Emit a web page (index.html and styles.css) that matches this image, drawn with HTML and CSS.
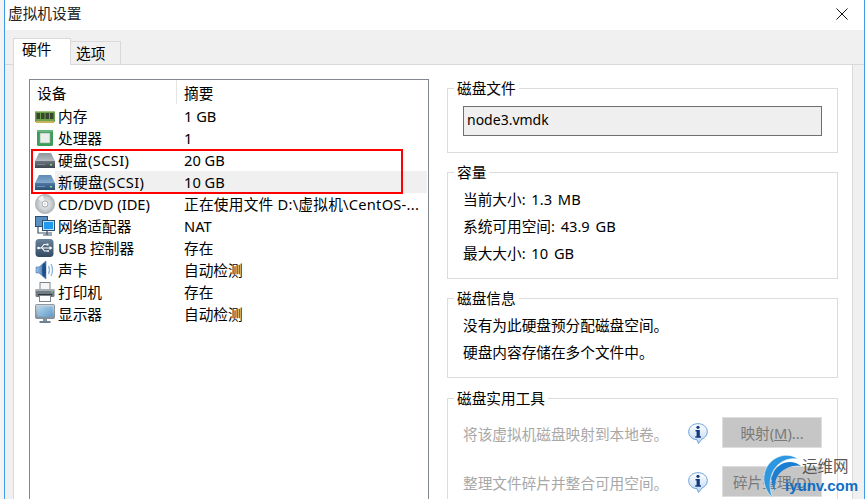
FILE: index.html
```html
<!DOCTYPE html>
<html lang="zh">
<head>
<meta charset="utf-8">
<title>虚拟机设置</title>
<link rel="stylesheet" href="styles.css">
</head>
<body>
<svg class="defs" width="0" height="0">
  <defs>
    <linearGradient id="hdTop" x1="0" y1="0" x2="0" y2="1"><stop offset="0" stop-color="#8d979f"/><stop offset="1" stop-color="#d7dce0"/></linearGradient>
    <linearGradient id="hdFront" x1="0" y1="0" x2="0" y2="1"><stop offset="0" stop-color="#6d7680"/><stop offset="1" stop-color="#3d454d"/></linearGradient>
    <linearGradient id="hbTop" x1="0" y1="0" x2="0" y2="1"><stop offset="0" stop-color="#5f8ab5"/><stop offset="1" stop-color="#a9c7e2"/></linearGradient>
    <linearGradient id="hbFront" x1="0" y1="0" x2="0" y2="1"><stop offset="0" stop-color="#4d79a5"/><stop offset="1" stop-color="#2c4f73"/></linearGradient>
    <radialGradient id="cdG"><stop offset="0" stop-color="#f4f5f6"/><stop offset=".6" stop-color="#cfd3d6"/><stop offset="1" stop-color="#aeb3b7"/></radialGradient>
    <linearGradient id="usbG" x1="0" y1="0" x2="0" y2="1"><stop offset="0" stop-color="#6a8299"/><stop offset="1" stop-color="#324b63"/></linearGradient>
    <linearGradient id="scrG" x1="0" y1="0" x2="1" y2="1"><stop offset="0" stop-color="#b5d5ec"/><stop offset="1" stop-color="#5f9ccb"/></linearGradient>
    <linearGradient id="monG" x1="0" y1="0" x2="0" y2="1"><stop offset="0" stop-color="#cdd6de"/><stop offset="1" stop-color="#7e8f9e"/></linearGradient>
    <linearGradient id="infoG" x1="0" y1="0" x2="0" y2="1"><stop offset="0" stop-color="#ffffff"/><stop offset="1" stop-color="#bcd6f2"/></linearGradient>
    <linearGradient id="spkG" x1="0" y1="0" x2="1" y2="0"><stop offset="0" stop-color="#9fc3e6"/><stop offset="1" stop-color="#2f6cad"/></linearGradient>
  </defs>
</svg>
<div class="screen">
  <div class="edge-left"></div>
  <div class="dialog">
    <header class="titlebar">
      <span class="title">虚拟机设置</span>
      <svg class="close" width="12" height="12" viewBox="0 0 12 12"><path d="M.5.5l11 11M11.500.5l-11 11" stroke="#111" fill="none"/></svg>
    </header>
    <div class="tabs">
      <div class="tab active">硬件</div>
      <div class="tab">选项</div>
    </div>
    <div class="panel">
      <div class="devices">
        <div class="dev-head"><span class="c1">设备</span><span class="c2">摘要</span></div>
        <div class="row"><span class="c1"><svg class="ico" viewBox="0 0 20 20"><rect y="5" width="20" height="11" fill="#6fa04a"/><rect y="5" width="20" height="1" fill="#a5c67f"/><rect x="1.500" y="7" width="3.500" height="6" fill="#38452f"/><rect x="6" y="7" width="3.500" height="6" fill="#38452f"/><rect x="10.500" y="7" width="3.500" height="6" fill="#38452f"/><rect x="15" y="7" width="3.500" height="6" fill="#38452f"/><rect x="1" y="15" width="18" height="2" fill="#c8b25a"/></svg>内存</span><span class="c2">1 GB</span></div>
        <div class="row"><span class="c1"><svg class="ico" viewBox="0 0 20 20"><rect x="2" y="2" width="16" height="16" rx="1.500" fill="#3c9c5a"/><rect x="2" y="2" width="16" height="2" fill="#66b67f"/><rect x="5" y="5" width="10" height="10" fill="#e9eeea" stroke="#8fa89a" stroke-width=".6"/></svg>处理器</span><span class="c2">1</span></div>
        <div class="row"><span class="c1 wide"><svg class="ico" viewBox="0 0 20 20"><path d="M4 3h12l4 8v7H0v-7z" fill="url(#hdTop)"/><rect y="11" width="20" height="7" fill="url(#hdFront)"/><rect x="15" y="14" width="2" height="1.500" fill="#7fe07a"/><rect x="2" y="14" width="8" height="1" fill="#7d868e"/></svg>硬盘(SCSI)</span><span class="c2">20 GB</span></div>
        <div class="row selected"><span class="c1 wide"><svg class="ico" viewBox="0 0 20 20"><path d="M4 3h12l4 8v7H0v-7z" fill="url(#hbTop)"/><rect y="11" width="20" height="7" fill="url(#hbFront)"/><rect x="15" y="14" width="2" height="1.500" fill="#7fe07a"/><rect x="2" y="14" width="8" height="1" fill="#6f94b8"/></svg>新硬盘(SCSI)</span><span class="c2">10 GB</span></div>
        <div class="row"><span class="c1"><svg class="ico" viewBox="0 0 20 20"><circle cx="10" cy="10" r="9.700" fill="url(#cdG)" stroke="#a5aaae" stroke-width=".6"/><path d="M10 10L3 5A9 9 0 0 1 8 1.500z" fill="#eef0f1"/><circle cx="10" cy="10" r="3" fill="#fff" stroke="#8f9599" stroke-width=".8"/><circle cx="10" cy="10" r="1" fill="#c9cdd0"/></svg>CD/DVD (IDE)</span><span class="c2 long">正在使用文件 D:\虚拟机\CentOS-...</span></div>
        <div class="row"><span class="c1"><svg class="ico" viewBox="0 0 20 20"><rect x=".500" y=".500" width="12" height="10" fill="#5b8fc0" stroke="#2d4f72"/><rect x="7.500" y="4.500" width="12" height="10" fill="#bfe0f7" stroke="#2d4f72"/><rect x="9" y="6" width="9" height="7" fill="#1f9af0"/><path d="M3 11v6h14M12 15v4M8 19h9" stroke="#3e5368" fill="none" stroke-width="1.200"/></svg>网络适配器</span><span class="c2">NAT</span></div>
        <div class="row"><span class="c1"><svg class="ico" viewBox="0 0 20 20"><rect x=".500" y="1" width="18" height="18" rx="3.500" fill="url(#usbG)"/><path d="M3 10h12M6 10l3-3.500h2.500M7 10l2.500 3H12" stroke="#fff" stroke-width="1.100" fill="none"/><path d="M14.500 8l3 2-3 2z" fill="#fff"/><rect x="11.500" y="5.500" width="2" height="2" fill="#fff"/><circle cx="13" cy="13" r="1" fill="#fff"/><circle cx="3.500" cy="10" r="1.300" fill="#fff"/></svg>USB 控制器</span><span class="c2">存在</span></div>
        <div class="row"><span class="c1"><svg class="ico" viewBox="0 0 20 20"><path d="M1 7h3l7-6v18l-7-6H1z" fill="url(#spkG)" stroke="#2c5f98" stroke-width=".5"/><ellipse cx="9" cy="10" rx="2" ry="7" fill="#1e4f88"/><path d="M13.500 6q2 4 0 8M16 4q3 6 0 12" stroke="#8db3d8" fill="none" stroke-width="1.300"/></svg>声卡</span><span class="c2">自动检测</span></div>
        <div class="row"><span class="c1"><svg class="ico" viewBox="0 0 20 20"><rect x="5" y=".500" width="10" height="7" fill="#f6f6f6" stroke="#7c858d"/><rect x=".500" y="7" width="19" height="8" rx="1.500" fill="#6f7a84"/><rect x=".500" y="7" width="19" height="2" fill="#a6adb3"/><rect x="3" y="12" width="14" height="1.500" fill="#2f363c"/><rect x="4.500" y="13.500" width="11" height="6" fill="#fbfbfb" stroke="#7c858d"/><rect x="16" y="9.500" width="2" height="1" fill="#7fe07a"/></svg>打印机</span><span class="c2">存在</span></div>
        <div class="row"><span class="c1"><svg class="ico" viewBox="0 0 20 20"><rect x=".500" y=".500" width="19" height="14" rx="1" fill="url(#monG)" stroke="#66788a" stroke-width=".7"/><rect x="2.500" y="2.500" width="15" height="10" fill="url(#scrG)"/><path d="M8 15h4v2H8z" fill="#8392a0"/><path d="M4.500 17h11v2h-11z" fill="#6f7f8e"/></svg>显示器</span><span class="c2">自动检测</span></div>
      </div>
      <div class="side">
        <section class="group g-file">
          <div class="legend">磁盘文件</div>
          <div class="file">node3.vmdk</div>
        </section>
        <section class="group g-cap">
          <div class="legend">容量</div>
          <p>当前大小: 1.3 MB</p>
          <p>系统可用空间: 43.9 GB</p>
          <p>最大大小: 10 GB</p>
        </section>
        <section class="group g-info">
          <div class="legend">磁盘信息</div>
          <p>没有为此硬盘预分配磁盘空间。</p>
          <p>硬盘内容存储在多个文件中。</p>
        </section>
        <section class="group g-tools">
          <div class="legend">磁盘实用工具</div>
          <div class="tool">
            <span class="tool-text">将该虚拟机磁盘映射到本地卷。</span>
            <svg class="info" viewBox="0 0 20 21"><path d="M10 .700c5.200 0 9.300 3.300 9.300 8 0 3.500-2.300 6-5.300 7.300L10.500 20.500 9 16.700C4.200 16.500.700 13.200.700 8.700.700 4 4.800.700 10 .700z" fill="url(#infoG)" stroke="#6ea2dc"/><circle cx="10" cy="4.300" r="1.600" fill="#12397f"/><path d="M7.500 7h4.300v6.300h1.200v1.500H7.300v-1.500h1.300V8.500H7.500z" fill="#12397f"/></svg>
            <span class="btn">映射(<u>M</u>)...</span>
          </div>
          <div class="tool">
            <span class="tool-text">整理文件碎片并整合可用空间。</span>
            <svg class="info" viewBox="0 0 20 21"><path d="M10 .700c5.200 0 9.300 3.300 9.300 8 0 3.500-2.300 6-5.300 7.300L10.500 20.500 9 16.700C4.200 16.500.700 13.200.700 8.700.700 4 4.800.700 10 .700z" fill="url(#infoG)" stroke="#6ea2dc"/><circle cx="10" cy="4.300" r="1.600" fill="#12397f"/><path d="M7.500 7h4.300v6.300h1.200v1.500H7.300v-1.500h1.300V8.500H7.500z" fill="#12397f"/></svg>
            <span class="btn">碎片整理(<u>D</u>)</span>
          </div>
        </section>
      </div>
    </div>
  </div>
  <div class="edge-right"></div>
  <div class="red-box"></div>
  <div class="mark">
    <svg class="mark-logo" width="44" height="47" viewBox="0 0 44 47"><path d="M36 7C24-2 4 6 2 24c-1 9 3 17 9 22C6 36 7 20 17 12c6-5 13-6 19-5z" fill="#2f97e0" stroke="#fff" stroke-width=".6"/><path d="M39 14C29 6 15 11 11 22c-2 6-1 12 2 17-1-8 1-15 7-20 6-5 13-6 19-5z" fill="#1a7fd2"/></svg>
    <span class="mark-cn">运维网</span>
    <span class="mark-en">iyunv.com</span>
  </div>
</div>
</body>
</html>
```
FILE: styles.css
```css
* { box-sizing: border-box; }
html, body { margin: 0; padding: 0; }
body {
  width: 865px; height: 499px; overflow: hidden; background: #fff;
  font-family: "Noto Sans", "Noto Sans CJK SC", sans-serif;
  font-size: 14.67px; color: #000;
}
.defs { position: absolute; }
.screen { position: relative; display: flex; width: 865px; height: 499px; overflow: hidden; }
.edge-left { width: 5px; background: #f4f4f4; border-right: 1px solid #3f9ae8; flex: none; }
.edge-right { width: 1px; background: #3f9ae8; flex: none; }
.dialog { flex: 1; min-width: 0; display: flex; flex-direction: column; background: #f0f0f0; }
.titlebar { height: 30px; background: #fff; display: flex; align-items: center; justify-content: space-between; padding: 0 16px 3px 3px; flex: none; }
.title { color: #222; line-height: 20px; margin-top: -2px; }
.tabs { display: flex; align-items: flex-end; height: 35px; padding-left: 8px; flex: none; border-bottom: 1px solid #d9d9d9; }
.tab { width: 50px; height: 23px; background: #f0f0f0; border: 1px solid #d9d9d9; border-bottom: 0; border-left: 0; display: flex; align-items: center; justify-content: flex-start; padding: 0 0 0 5px; line-height: 18px; }
.tab.active { width: 58px; height: 27px; background: #fff; margin-bottom: -1px; position: relative; padding: 0 0 6px 8px; border-left: 1px solid #d9d9d9; }
.panel { flex: 1; min-height: 0; margin: 0 11px 0 8px; background: #fff; border-left: 1px solid #d9d9d9; border-right: 1px solid #d9d9d9; display: flex; padding: 14px 14px 0 15px; gap: 18px; overflow: hidden; }
.devices { width: 400px; height: 500px; border: 1px solid #828790; flex: none; padding: 1px 1px 0 1px; }
.dev-head { display: flex; height: 24px; align-items: center; padding-bottom: 2px; }
.row { display: flex; height: 22px; align-items: center; line-height: 20px; padding-bottom: 1px; }
.row.selected { background: linear-gradient(#f0f0f0, #f0f0f0) 24px 0 / 100% 100% no-repeat; }
.c1 { width: 146px; padding-left: 4px; display: flex; align-items: center; white-space: nowrap; flex: none; }
.c1.wide { letter-spacing: .35px; }
.dev-head .c1 { padding-left: 6px; border-right: 1px solid #e5e5e5; height: 24px; }
.c2 { padding-left: 7px; white-space: nowrap; }
.c2.long { letter-spacing: .25px; }
.ico { width: 20px; height: 20px; margin-right: 3px; flex: none; }
.side { flex: 1; min-width: 0; padding-top: 9px; }
.group { margin: 0 0 19px; padding: 0 15px; border: 1px solid #dcdcdc; }
.legend { width: fit-content; height: 18px; line-height: 18px; margin: -10px 0 5px -9px; padding: 0 3px; background: #fff; white-space: nowrap; }
.group p { margin: 0; line-height: 27px; white-space: nowrap; word-spacing: 2px; }
.g-file { height: 65px; }
.file { height: 30px; margin-top: 9px; border: 1px solid #6f6f6f; background: #efefef; padding-left: 3px; line-height: 25px; font-size: 14px; }
.g-cap { height: 107px; }
.g-info { height: 80px; margin-bottom: 20px; }
.g-tools { height: 200px; }
.tool { display: flex; align-items: center; height: 31px; margin: 0 0 18px; }
.legend + .tool { margin-top: 10px; }
.tool-text { width: 226px; white-space: nowrap; color: #a8a8a8; padding-top: 1px; }
.info { width: 20px; height: 21px; flex: none; margin-top: 2px; }
.btn { margin-left: 14px; width: 100px; height: 31px; background: #c6c6c6; border: 1px solid #dedede; color: #7a7a7a; display: flex; align-items: center; justify-content: center; white-space: nowrap; flex: none; }
.close { flex: none; }
.red-box { position: absolute; left: 31px; top: 149px; width: 372px; height: 45px; border: 2px solid #f00; }
.mark { position: absolute; left: 760px; top: 451px; width: 105px; height: 48px; }
.mark-logo { position: absolute; left: 2px; top: 1px; }
.mark-cn { position: absolute; left: 42px; top: 6px; font-size: 15.5px; line-height: 18px; color: #555; }
.mark-en { position: absolute; left: 25px; top: 25px; font-size: 15px; line-height: 20px; font-weight: 700; color: #0f6fc6; font-family: "Liberation Sans", sans-serif; }
```
